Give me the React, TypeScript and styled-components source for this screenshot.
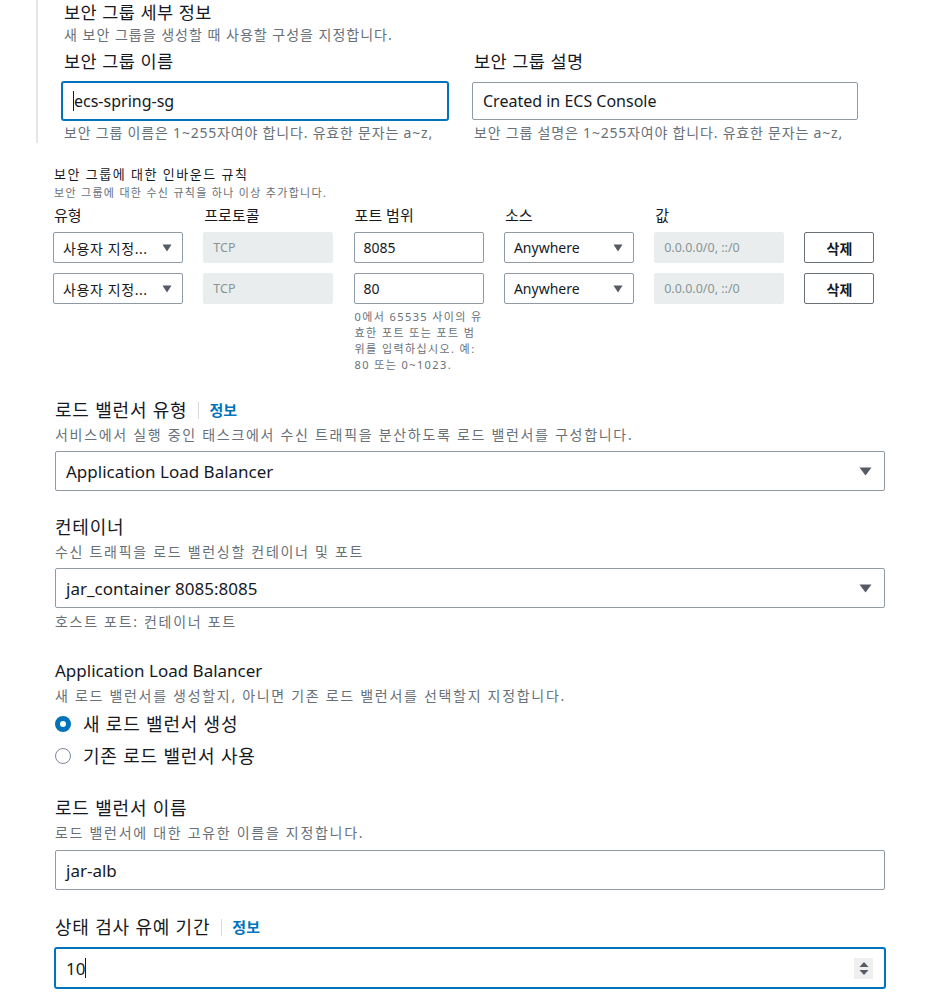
import React from 'react';
import styled, { createGlobalStyle, css } from 'styled-components';

const GlobalStyle = createGlobalStyle`
  body {
    margin: 0;
    background: #ffffff;
    font-family: "Noto Sans", "Noto Sans CJK KR", sans-serif;
    color: #16191f;
  }
`;

const Page = styled.div`
  width: 937px;
  height: 1007px;
  overflow: hidden;
`;

/* ---------- security group details ---------- */

const DetailsBox = styled.div`
  margin-left: 36px;
  border-left: 2px solid #e4e7e8;
  padding-left: 24px;
  width: 797px;
  padding-bottom: 1px;
`;

const Heading = styled.div`
  font-size: 17.5px;
  letter-spacing: 0.5px;
  line-height: 24px;
  padding-left: 2px;
`;

const Sub = styled.div<{ $mt?: number; $ls?: number }>`
  font-size: 14px;
  letter-spacing: ${(p) => p.$ls ?? 1}px;
  line-height: 18px;
  color: #687078;
  padding-left: 2px;
  margin-top: ${(p) => p.$mt ?? 2}px;
`;

const TwoCols = styled.div`
  display: grid;
  grid-template-columns: 386px 386px;
  column-gap: 24px;
  margin-top: 5px;
`;

const Field = styled.div`
  display: flex;
  flex-direction: column;
`;

const FieldLabel = styled.div`
  font-size: 17.5px;
  letter-spacing: 0.5px;
  line-height: 24px;
  padding-left: 2px;
`;

const TextBox = styled.div<{ $focused?: boolean; $height?: number; $size?: number }>`
  box-sizing: border-box;
  height: ${(p) => p.$height ?? 40}px;
  border: 1px solid #8f9aa5;
  border-radius: 2px;
  display: flex;
  align-items: center;
  justify-content: space-between;
  padding: 0 12px 0 10px;
  font-size: ${(p) => p.$size ?? 17}px;
  background: #fff;
  ${(p) =>
    p.$focused &&
    css`
      border-color: #0073bb;
      box-shadow: 0 0 0 1px #0073bb;
    `}
`;

const Caret = styled.span`
  display: inline-block;
  width: 1px;
  height: 20px;
  background: #16191f;
  vertical-align: middle;
`;

const Value = styled.span`
  display: flex;
  align-items: center;
`;

/* ---------- inbound rules ---------- */

const Inbound = styled.div`
  padding-left: 54px;
  margin-top: 21px;
`;

const SmallHeading = styled.div`
  font-size: 13px;
  letter-spacing: 1.5px;
  line-height: 20px;
`;

const SmallSub = styled.div`
  font-size: 11px;
  letter-spacing: 1.3px;
  line-height: 16px;
  color: #687078;
  margin-top: 1px;
`;

const RuleGrid = styled.div`
  display: grid;
  grid-template-columns: repeat(5, 130px) 70px;
  column-gap: 20.3px;
  row-gap: 10px;
  margin-left: -1px;
  margin-top: 4px;
`;

const ColHead = styled.div`
  font-size: 15px;
  line-height: 20px;
  padding-left: 1px;
  margin-bottom: -3px;
`;

const SmallBox = styled.div<{ $disabled?: boolean }>`
  box-sizing: border-box;
  height: 31px;
  border: 1px solid #8f9aa5;
  border-radius: 2px;
  display: flex;
  align-items: center;
  justify-content: space-between;
  padding: 0 10px 0 9px;
  font-size: 14px;
  color: #16191f;
  ${(p) =>
    p.$disabled &&
    css`
      background: #eaeded;
      border-color: #eaeded;
      color: #879596;
      font-size: 12.5px;
    `}
`;

const Korean = styled.span`
  letter-spacing: 0.6px;
`;

const DeleteButton = styled.div`
  box-sizing: border-box;
  height: 31px;
  border: 1px solid #687078;
  border-radius: 2px;
  display: flex;
  align-items: center;
  justify-content: center;
  font-size: 14px;
  font-weight: 700;
  color: #16191f;
`;

const PortHint = styled.div`
  grid-column: 3;
  font-size: 11px;
  letter-spacing: 1.4px;
  line-height: 16px;
  color: #687078;
  margin-top: -5px;
  padding-left: 1px;
  white-space: nowrap;
`;

/* ---------- load balancer ---------- */

const LbSection = styled.div`
  padding-left: 55px;
  width: 830px;
  margin-top: 25px;
  display: flex;
  flex-direction: column;
`;

const Group = styled.div<{ $gap?: number }>`
  display: flex;
  flex-direction: column;
  margin-bottom: ${(p) => p.$gap ?? 24}px;
`;

const GroupLabel = styled.div<{ $latin?: boolean }>`
  display: flex;
  align-items: center;
  font-size: ${(p) => (p.$latin ? 17 : 18)}px;
  letter-spacing: ${(p) => (p.$latin ? 0 : 0.8)}px;
  line-height: 24px;
`;

const Divider = styled.span`
  width: 1px;
  height: 17px;
  background: #d5dbdb;
  margin: 0 10px 0 11px;
`;

const InfoLink = styled.span`
  font-size: 15px;
  letter-spacing: 0;
  font-weight: 700;
  color: #0073bb;
`;

const GroupSub = styled.div<{ $mt?: number }>`
  font-size: 14px;
  letter-spacing: 1.7px;
  line-height: 18px;
  color: #687078;
  margin-top: ${(p) => p.$mt ?? 4}px;
`;

const Control = styled.div<{ $mt?: number }>`
  margin-top: ${(p) => p.$mt ?? 7}px;
`;

const Arrow = styled.svg`
  flex: none;
`;

const Spinner = styled.div`
  width: 19px;
  height: 21px;
  background: #efefef;
  display: flex;
  align-items: center;
  justify-content: center;
  margin-right: -1px;
`;

const RadioList = styled.div`
  display: flex;
  flex-direction: column;
  gap: 8px;
  margin-top: 7px;
`;

const RadioRow = styled.div`
  display: flex;
  align-items: center;
  font-size: 18px;
  letter-spacing: 0.8px;
  line-height: 24px;
  gap: 12px;
`;

const RadioDot = styled.span<{ $checked?: boolean }>`
  box-sizing: border-box;
  width: 16px;
  height: 16px;
  border-radius: 50%;
  border: 1.5px solid #7d8998;
  ${(p) =>
    p.$checked &&
    css`
      border: 5px solid #0073bb;
    `}
`;

const DownArrow = ({ small }: { small?: boolean }) =>
  small ? (
    <Arrow width="10" height="8" viewBox="0 0 10 8">
      <path d="M0.5 0.5 H9.5 L5 7.5 Z" fill="#545b64" />
    </Arrow>
  ) : (
    <Arrow width="13" height="9" viewBox="0 0 13 9">
      <path d="M0.5 0.5 H12.5 L6.5 8.5 Z" fill="#545b64" />
    </Arrow>
  );

const rules = [{ port: '8085' }, { port: '80' }];

const App: React.FC = () => {
  return (
    <Page>
      <GlobalStyle />
      <DetailsBox>
        <Heading>보안 그룹 세부 정보</Heading>
        <Sub>새 보안 그룹을 생성할 때 사용할 구성을 지정합니다.</Sub>
        <TwoCols>
          <Field>
            <FieldLabel>보안 그룹 이름</FieldLabel>
            <Control $mt={9}>
              <TextBox $focused $height={38} $size={16}>
                <Value>
                  <Caret />
                  ecs-spring-sg
                </Value>
              </TextBox>
            </Control>
            <Sub $mt={4} $ls={0.8}>
              보안 그룹 이름은 1~255자여야 합니다. 유효한 문자는 a~z,
            </Sub>
          </Field>
          <Field>
            <FieldLabel>보안 그룹 설명</FieldLabel>
            <Control $mt={9}>
              <TextBox $height={38} $size={16}>
                Created in ECS Console
              </TextBox>
            </Control>
            <Sub $mt={4} $ls={0.8}>
              보안 그룹 설명은 1~255자여야 합니다. 유효한 문자는 a~z,
            </Sub>
          </Field>
        </TwoCols>
      </DetailsBox>

      <Inbound>
        <SmallHeading>보안 그룹에 대한 인바운드 규칙</SmallHeading>
        <SmallSub>보안 그룹에 대한 수신 규칙을 하나 이상 추가합니다.</SmallSub>
        <RuleGrid>
          <ColHead>유형</ColHead>
          <ColHead>프로토콜</ColHead>
          <ColHead>포트 범위</ColHead>
          <ColHead>소스</ColHead>
          <ColHead>값</ColHead>
          <div />
          {rules.map((r) => (
            <React.Fragment key={r.port}>
              <SmallBox>
                <Korean>사용자 지정...</Korean>
                <DownArrow small />
              </SmallBox>
              <SmallBox $disabled>TCP</SmallBox>
              <SmallBox>{r.port}</SmallBox>
              <SmallBox>
                Anywhere
                <DownArrow small />
              </SmallBox>
              <SmallBox $disabled>0.0.0.0/0, ::/0</SmallBox>
              <DeleteButton>삭제</DeleteButton>
            </React.Fragment>
          ))}
          <PortHint>
            0에서 65535 사이의 유
            <br />
            효한 포트 또는 포트 범
            <br />
            위를 입력하십시오. 예:
            <br />
            80 또는 0~1023.
          </PortHint>
        </RuleGrid>
      </Inbound>

      <LbSection>
        <Group>
          <GroupLabel>
            로드 밸런서 유형
            <Divider />
            <InfoLink>정보</InfoLink>
          </GroupLabel>
          <GroupSub>서비스에서 실행 중인 태스크에서 수신 트래픽을 분산하도록 로드 밸런서를 구성합니다.</GroupSub>
          <Control>
            <TextBox>
              Application Load Balancer
              <DownArrow />
            </TextBox>
          </Control>
        </Group>

        <Group $gap={28}>
          <GroupLabel>컨테이너</GroupLabel>
          <GroupSub>수신 트래픽을 로드 밸런싱할 컨테이너 및 포트</GroupSub>
          <Control>
            <TextBox>
              jar_container 8085:8085
              <DownArrow />
            </TextBox>
          </Control>
          <GroupSub $mt={5}>호스트 포트: 컨테이너 포트</GroupSub>
        </Group>

        <Group $gap={28}>
          <GroupLabel $latin>Application Load Balancer</GroupLabel>
          <GroupSub>새 로드 밸런서를 생성할지, 아니면 기존 로드 밸런서를 선택할지 지정합니다.</GroupSub>
          <RadioList>
            <RadioRow>
              <RadioDot $checked />새 로드 밸런서 생성
            </RadioRow>
            <RadioRow>
              <RadioDot />기존 로드 밸런서 사용
            </RadioRow>
          </RadioList>
        </Group>

        <Group $gap={25}>
          <GroupLabel>로드 밸런서 이름</GroupLabel>
          <GroupSub>로드 밸런서에 대한 고유한 이름을 지정합니다.</GroupSub>
          <Control $mt={8}>
            <TextBox>jar-alb</TextBox>
          </Control>
        </Group>

        <Group>
          <GroupLabel>
            상태 검사 유예 기간
            <Divider />
            <InfoLink>정보</InfoLink>
          </GroupLabel>
          <Control $mt={9}>
            <TextBox $focused>
              <Value>
                10
                <Caret />
              </Value>
              <Spinner>
                <svg width="10" height="15" viewBox="0 0 10 15">
                  <path d="M0.5 6 L5 1 L9.5 6 Z" fill="#545b64" />
                  <path d="M0.5 9 L5 14 L9.5 9 Z" fill="#545b64" />
                </svg>
              </Spinner>
            </TextBox>
          </Control>
        </Group>
      </LbSection>
    </Page>
  );
};

export default App;
